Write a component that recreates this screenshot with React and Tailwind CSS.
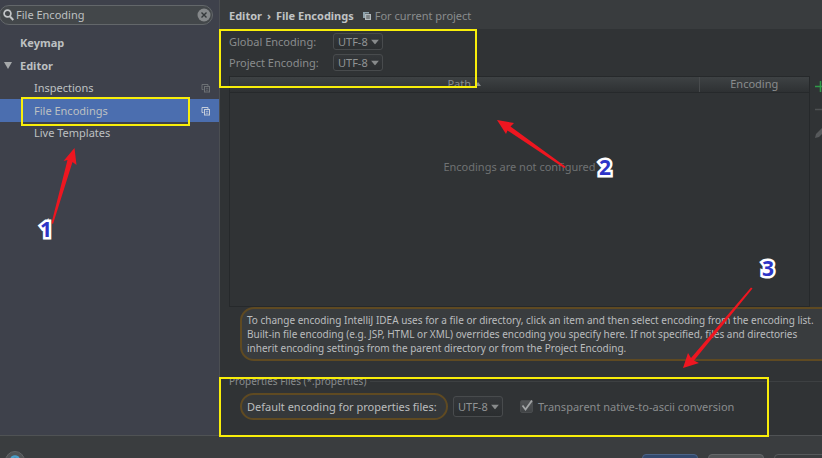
import { useState } from "react";

function CopyIcon({ className }) {
  return (
    <svg viewBox="0 0 10 10" className={`h-[10px] w-[10px] shrink-0 ${className}`} fill="none" stroke="currentColor" aria-hidden="true">
      <path d="M2.5 6.5h-1.5v-5h6v1.5" />
      <rect x="3.5" y="3.5" width="5" height="5.5" />
      <path d="M4.8 5.3h2.5M4.8 7.2h2.5" strokeWidth="0.8" />
    </svg>
  );
}

function ProjectIcon() {
  return (
    <svg viewBox="0 0 10 10" className="h-[10px] w-[10px] shrink-0" aria-hidden="true">
      <path d="M1 1h6v1.500H3V7H1z" fill="#8fa3ad" />
      <rect x="3" y="3" width="6" height="6" fill="#b3babd" />
      <path d="M4.2 5h3.6M4.2 7h3.6" stroke="#34383a" strokeWidth="0.9" />
    </svg>
  );
}

function EncodingSelect({ id, className }) {
  const [value, setValue] = useState("UTF-8");
  return (
    <div className={`relative w-[50px] shrink-0 ${className}`}>
      <select
        id={id}
        value={value}
        onChange={(e) => setValue(e.target.value)}
        className="block h-full w-full appearance-none rounded-[3px] border border-[#484b4d] bg-gradient-to-b from-[#34373a] to-[#2b2e30] pl-1 text-[11px] leading-none text-[#909394] outline-none"
      >
        <option>UTF-8</option>
        <option>GBK</option>
      </select>
      <svg viewBox="0 0 8 5" className="pointer-events-none absolute top-1/2 right-1 h-[5px] w-[8px] -translate-y-1/2" aria-hidden="true">
        <path d="M0 0h8L4 5z" fill="#878a8b" />
      </svg>
    </div>
  );
}

function Marker({ children, className }) {
  return (
    <span
      className={`absolute font-['Noto_Sans'] text-[21px] leading-[22px] font-bold text-[#2d35c8] [-webkit-text-stroke:5px_white] [paint-order:stroke_fill] ${className}`}
    >
      {children}
    </span>
  );
}

function Annotations() {
  return (
    <div className="pointer-events-none absolute inset-0">
      <div className="absolute top-[97px] left-[21px] h-[29px] w-[169px] border-2 border-[#f8ee0a]" />
      <div className="absolute top-[29px] left-[219px] h-[59px] w-[258px] border-2 border-[#f8ee0a]" />
      <div className="absolute top-[377px] left-[219px] h-[60px] w-[550px] border-2 border-[#f8ee0a]" />
      <svg className="absolute top-0 left-0 h-[458px] w-[822px]" viewBox="0 0 822 458" fill="#ee1620" aria-hidden="true">
        <path d="M74.500 148L76.500 165L72.500 162L53 224L51.500 223L67.500 160L63.500 161Z" />
        <path d="M497 120L514 123L510.500 126.500L566 167L564 168L507.500 130.500L506 134Z" />
        <path d="M683 368L688 353L691 358L751 287.500L752.500 288.500L694 360.500L699 363Z" />
      </svg>
      <Marker className="top-[218px] left-[40px]">1</Marker>
      <Marker className="top-[156px] left-[599px]">2</Marker>
      <Marker className="top-[257px] left-[762px]">3</Marker>
    </div>
  );
}

function Sidebar() {
  const [query, setQuery] = useState("File Encoding");
  return (
    <aside className="flex w-[220px] shrink-0 flex-col border-r border-[#4b4e52] bg-[#3e414b] pt-[5px] text-[#bdc0c2]">
      <div className="-ml-px flex h-5 w-[214px] items-center gap-[2px] rounded-full border border-[#63676a] bg-[#43474a] pr-px pl-[3px]">
        <svg viewBox="0 0 11 12" className="h-3 w-[11px] shrink-0" fill="none" stroke="#c3c6c8" aria-hidden="true">
          <circle cx="4.500" cy="4.500" r="3.400" strokeWidth="1.700" />
          <path d="M7 7.500L10.300 11" strokeWidth="2" />
        </svg>
        <input
          type="text"
          aria-label="Search settings"
          value={query}
          onChange={(e) => setQuery(e.target.value)}
          className="min-w-0 flex-1 bg-transparent text-[11px] outline-none"
        />
        <button type="button" aria-label="Clear search" onClick={() => setQuery("")} className="shrink-0">
          <svg viewBox="0 0 14 14" className="h-[14px] w-[14px]" aria-hidden="true">
            <circle cx="7" cy="7" r="6.500" fill="#85888a" />
            <path d="M4.500 4.500l5 5M9.500 4.500l-5 5" stroke="#34383a" strokeWidth="1.400" />
          </svg>
        </button>
      </div>
      <nav className="mt-[7px] flex flex-col">
        <button type="button" className="flex h-[22px] items-center pl-5 font-bold">Keymap</button>
        <button type="button" className="flex h-[23px] items-center gap-2 pl-1 font-bold">
          <svg viewBox="0 0 8 7" className="h-[7px] w-2" aria-hidden="true">
            <path d="M0 0h8L4 7z" fill="#a5a8aa" />
          </svg>
          Editor
        </button>
        <button type="button" className="flex h-[22px] items-center justify-between pr-2 pl-[34px]">
          Inspections
          <CopyIcon className="text-[#6d7175]" />
        </button>
        <button type="button" className="flex h-[23px] items-center justify-between bg-[#4b6eaf] pr-2 pl-[34px]">
          File Encodings
          <CopyIcon className="text-[#c5cddb]" />
        </button>
        <button type="button" className="flex h-[22px] items-center pl-[34px]">Live Templates</button>
      </nav>
    </aside>
  );
}

function EncodingTable() {
  return (
    <div className="mt-1 flex h-[231px] gap-[5px]">
      <div className="flex min-w-0 flex-1 flex-col border border-[#26292b]">
        <table className="w-full table-fixed border-collapse">
          <thead>
            <tr className="h-[15px] bg-gradient-to-b from-[#3e4244] to-[#2e3133] leading-[14px]">
              <th className="border-b border-[#26292b] p-0 font-normal">
                <span className="inline-flex items-center gap-1">
                  Path
                  <svg viewBox="0 0 6 4" className="h-1 w-[6px]" aria-hidden="true">
                    <path d="M3 0l3 4H0z" fill="#898c8d" />
                  </svg>
                </span>
              </th>
              <th className="w-[110px] border-b border-l border-b-[#26292b] border-l-[#484b4d] p-0 font-normal">Encoding</th>
            </tr>
          </thead>
        </table>
        <p className="pt-[66px] text-center text-[#6f7273]">Encodings are not configured</p>
      </div>
      <div className="flex w-[7px] shrink-0 flex-col gap-3 overflow-hidden pt-[5px]">
        <button type="button" aria-label="Add" className="h-[11px] w-[11px] shrink-0">
          <svg viewBox="0 0 11 11" aria-hidden="true"><path d="M5.500 0v11M0 5.500h11" stroke="#2f9a49" strokeWidth="1.500" /></svg>
        </button>
        <button type="button" aria-label="Remove" className="h-[11px] w-[11px] shrink-0">
          <svg viewBox="0 0 11 11" aria-hidden="true"><path d="M0 5.500h11" stroke="#4e5153" strokeWidth="1.500" /></svg>
        </button>
        <button type="button" aria-label="Edit" className="h-[11px] w-[11px] shrink-0">
          <svg viewBox="0 0 11 11" aria-hidden="true"><path d="M0 11l1-4 7-7 3 3-7 7z" fill="#56595b" /></svg>
        </button>
      </div>
    </div>
  );
}

function Content() {
  const [transparent, setTransparent] = useState(true);
  return (
    <main className="flex min-w-0 flex-1 flex-col overflow-hidden bg-[#303335] text-[#898c8d]">
      <header className="flex h-[29px] shrink-0 items-center gap-2 bg-[#393c3e] pt-[3px] pl-[9px]">
        <h1 className="flex gap-[5px] font-bold text-[#c0c3c4]">
          <span>Editor</span>
          <span>›</span>
          <span>File Encodings</span>
        </h1>
        <p className="flex items-center gap-[3px]">
          <ProjectIcon />
          For current project
        </p>
      </header>
      <div className="flex flex-col pt-1 pl-[9px]">
        <div className="flex flex-col gap-1">
          <div className="flex items-center">
            <label htmlFor="global-encoding" className="w-[104px]">Global Encoding:</label>
            <EncodingSelect id="global-encoding" className="h-[17px]" />
          </div>
          <div className="flex items-center">
            <label htmlFor="project-encoding" className="w-[104px]">Project Encoding:</label>
            <EncodingSelect id="project-encoding" className="h-[17px]" />
          </div>
        </div>
        <div className="pt-px">
          <EncodingTable />
        </div>
        <p className="-mr-4 ml-[11px] rounded-[14px] border-2 border-[#5f4a22] bg-[#393c3e] py-[4px] pl-[5px] text-[10px] leading-[14px] whitespace-nowrap text-[#bbbdbe]">
          To change encoding IntelliJ IDEA uses for a file or directory, click an item and then select encoding from the encoding list.
          <br />
          Built-in file encoding (e.g. JSP, HTML or XML) overrides encoding you specify here. If not specified, files and directories
          <br />
          inherit encoding settings from the parent directory or from the Project Encoding.
        </p>
        <fieldset className="mt-[13px] min-w-0">
          <div className="flex items-center gap-1 text-[10px] leading-[14px]">
            <span>Properties Files (*.properties)</span>
            <span className="h-px flex-1 bg-[#3d4042]" />
          </div>
          <div className="mt-[5px] flex items-center pl-[11px]">
            <label htmlFor="properties-encoding" className="flex h-[27px] w-[208px] items-center rounded-full border-2 border-[#5f4a22] bg-[#35383a] pl-[5px] whitespace-nowrap text-[#bbbdbe]">
              Default encoding for properties files:
            </label>
            <EncodingSelect id="properties-encoding" className="ml-[5px] h-[21px]" />
            <label className="ml-[17px] flex items-center gap-[5px] whitespace-nowrap">
              <span className="relative flex h-[13px] w-[13px]">
                <input
                  type="checkbox"
                  checked={transparent}
                  onChange={(e) => setTransparent(e.target.checked)}
                  className="h-[13px] w-[13px] appearance-none rounded-[2px] border border-[#494c4e] bg-gradient-to-b from-[#515456] to-[#404345]"
                />
                {transparent && (
                  <svg viewBox="0 0 13 13" className="pointer-events-none absolute inset-0 h-[13px] w-[13px]" fill="none" aria-hidden="true">
                    <path d="M2.500 5.500L5.500 9.500L12 0.500" stroke="#a2a5a6" strokeWidth="1.800" />
                  </svg>
                )}
              </span>
              Transparent native-to-ascii conversion
            </label>
          </div>
        </fieldset>
      </div>
    </main>
  );
}

export default function App() {
  return (
    <div className="relative flex h-screen flex-col overflow-hidden bg-[#3a3d3f] font-['Noto_Sans',sans-serif] text-[11px] leading-4">
      <div className="flex min-h-0 flex-1">
        <Sidebar />
        <Content />
      </div>
      <footer className="flex h-[23px] shrink-0 items-start justify-between overflow-hidden border-t border-[#4f5254] pl-[5px]">
        <button type="button" aria-label="Help" className="mt-[15px] h-5 w-5 shrink-0">
          <svg viewBox="0 0 20 20" aria-hidden="true">
            <circle cx="10" cy="10" r="9.500" fill="#505456" stroke="#626567" />
            <path d="M6.500 8Q7 5.500 10 5.500T13.500 8Q13.500 9.500 10 11.500V13" fill="none" stroke="#4a9fc9" strokeWidth="2.500" />
          </svg>
        </button>
        <div className="-mr-2 mt-[18px] flex gap-[10px]">
          <button type="button" aria-label="OK" className="h-6 w-[56px] rounded-[4px] border border-[#4c6386] bg-[#32496d]" />
          <button type="button" aria-label="Cancel" className="h-6 w-[56px] rounded-[4px] border border-[#646769] bg-[#515456]" />
          <button type="button" aria-label="Apply" className="h-6 w-[56px] rounded-[4px] border border-[#56595b] bg-[#3a3d3f]" />
        </div>
      </footer>
      <Annotations />
    </div>
  );
}
